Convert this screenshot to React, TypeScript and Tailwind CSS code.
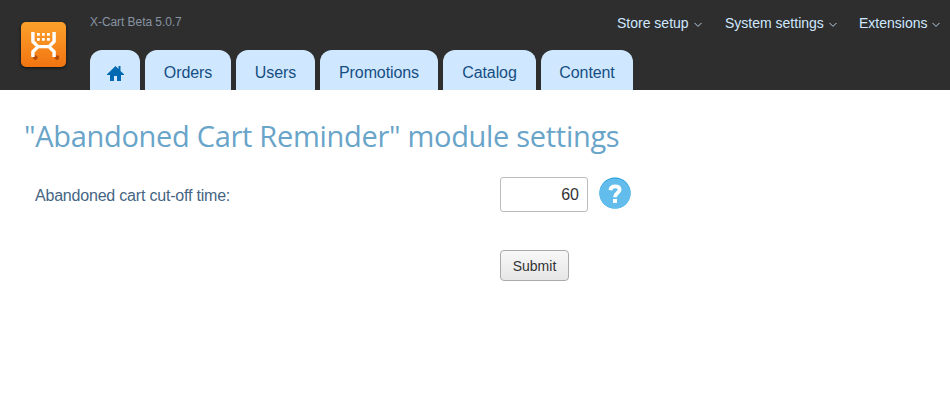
import React from "react";

const tabs = [
  { label: "Orders", size: "w-[86px]" },
  { label: "Users", size: "w-[79px]" },
  { label: "Promotions", size: "w-[118px]" },
  { label: "Catalog", size: "w-[93px]" },
  { label: "Content", size: "w-[92px]" },
];

const menus = [
  { label: "Store setup", size: "w-[108px]" },
  { label: "System settings", size: "w-[134px]" },
  { label: "Extensions", size: "w-[91px]" },
];

function Logo() {
  return (
    <div className="mt-[22px] ml-[21px] h-[45px] w-[45px] shrink-0 rounded-[5px] bg-linear-to-b from-[#fca12b] to-[#f27410] shadow-[0_1px_3px_#111]">
      <svg viewBox="0 0 45 45" width="45" height="45" fill="none">
        <circle cx="14.3" cy="35.6" r="2.3" fill="#b54a08" />
        <circle cx="36" cy="35.6" r="2.3" fill="#b54a08" />
        <path
          d="M11.9 10V19.5L17 24.6H28L33.1 19.5V10M11.9 35V29.7L17 24.6H28L33.1 29.7V35"
          stroke="#fff"
          strokeWidth="3.4"
          strokeLinejoin="round"
        />
        <path
          d="M16 11h2.8v2.8h-2.8zM21 11h2.8v2.8h-2.8zM26 11h2.8v2.8h-2.8zM16 16h2.8v2.8h-2.8zM21 16h2.8v2.8h-2.8zM26 16h2.8v2.8h-2.8z"
          fill="#fff"
        />
      </svg>
    </div>
  );
}

export default function App() {
  return (
    <div className="min-h-[400px] w-[950px] bg-white font-['Liberation_Sans',Arial,sans-serif]">
      <header className="flex h-[90px] bg-[#2e2e2e]">
        <Logo />
        <div className="ml-6 flex flex-1 flex-col justify-between">
          <div className="flex justify-between">
            <div className="mt-[14px] text-[12px] leading-4 tracking-[-0.06px] text-[#8794a3]">X-Cart Beta 5.0.7</div>
            <nav className="mt-[13px] flex">
              {menus.map((m) => (
                <a key={m.label} className={`${m.size} flex h-5 items-center gap-[5px] text-[14px] whitespace-nowrap text-[#d0e8ff]`}>
                  {m.label}
                  <svg width="8" height="6" viewBox="0 0 8 6" fill="none" className="mt-[3px]">
                    <path d="M0.5 0.9L4 4.4L7.5 0.9" stroke="#b8cfe3" />
                  </svg>
                </a>
              ))}
            </nav>
          </div>
          <nav className="flex gap-[5px]">
            <a className="flex h-10 w-[50px] justify-center rounded-t-[12px] bg-[#d0e8ff] pt-[15px]">
              <svg width="17" height="16" viewBox="0 0 17 16" fill="#0069b1">
                <path d="M8.5 1L11.5 4V1H13.5V6L17 9.2V10H14V16H10V11H7V16H3V10H0V9.2Z" />
              </svg>
            </a>
            {tabs.map((t) => (
              <a key={t.label} className={`${t.size} flex h-10 items-center justify-center rounded-t-[12px] bg-[#d0e8ff] pt-[5px] text-[16px] tracking-[-0.1px] text-[#154e83]`}>
                {t.label}
              </a>
            ))}
          </nav>
        </div>
      </header>
      <main>
        <h1 className="ml-[24px] h-[86px] pt-[26px] font-['Open_Sans',sans-serif] text-[29px] leading-10 font-medium tracking-[-0.3px] whitespace-nowrap text-[#69a4c9]">
          "Abandoned Cart Reminder" module settings
        </h1>
        <div className="flex">
          <label className="ml-[35px] w-[465px] pt-2 text-[16px] leading-6 tracking-[-0.2px] text-[#456583]">
            Abandoned cart cut-off time:
          </label>
          <div className="mt-px flex h-[35px] w-[88px] items-center justify-end rounded-[3px] border border-[#bbb] pr-2 text-[16px] text-[#333]">
            60
          </div>
          <svg width="32" height="32" viewBox="0 0 32 32" className="mt-px ml-[11px]">
            <circle cx="16" cy="16" r="15.6" fill="#189bdc" />
            <ellipse cx="16" cy="16.5" rx="15.5" ry="15.1" fill="#62bdec" />
            <path d="M11.4 13.2Q11.8 9.4 16 9.4Q20.6 9.4 20.6 12.7C20.6 15.8 16 15.8 16 20.3" fill="none" stroke="#fff" strokeWidth="3.8" />
            <path d="M14 22h4v3.9h-4z" fill="#fff" />
          </svg>
        </div>
        <button className="mt-[38px] ml-[500px] block h-[31px] w-[69px] rounded-[4px] border border-[#aaa] bg-linear-to-b from-[#f8f8f8] to-[#e6e6e6] pt-px text-[14px] text-[#333]">
          Submit
        </button>
      </main>
    </div>
  );
}
